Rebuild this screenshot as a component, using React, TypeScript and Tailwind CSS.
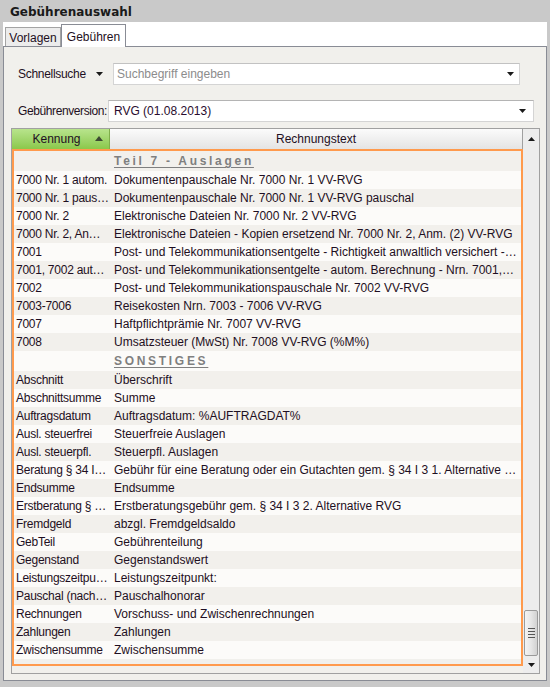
import React from "react";

type Row = { k?: string; t: string; section?: boolean };

const rows: Row[] = [
	{ t: "Teil 7 - Auslagen", section: true },
	{ k: "7000 Nr. 1 autom.", t: "Dokumentenpauschale Nr. 7000 Nr. 1 VV-RVG" },
	{ k: "7000 Nr. 1 pauschal", t: "Dokumentenpauschale Nr. 7000 Nr. 1 VV-RVG pauschal" },
	{ k: "7000 Nr. 2", t: "Elektronische Dateien Nr. 7000 Nr. 2 VV-RVG" },
	{ k: "7000 Nr. 2, Anm. (2)", t: "Elektronische Dateien - Kopien ersetzend Nr. 7000 Nr. 2, Anm. (2) VV-RVG" },
	{ k: "7001", t: "Post- und Telekommunikationsentgelte - Richtigkeit anwaltlich versichert - Nr. 7001 VV-RVG" },
	{ k: "7001, 7002 autom.", t: "Post- und Telekommunikationsentgelte - autom. Berechnung - Nrn. 7001, 7002 VV-RVG" },
	{ k: "7002", t: "Post- und Telekommunikationspauschale Nr. 7002 VV-RVG" },
	{ k: "7003-7006", t: "Reisekosten Nrn. 7003 - 7006 VV-RVG" },
	{ k: "7007", t: "Haftpflichtprämie Nr. 7007 VV-RVG" },
	{ k: "7008", t: "Umsatzsteuer (MwSt) Nr. 7008 VV-RVG (%M%)" },
	{ t: "SONSTIGES", section: true },
	{ k: "Abschnitt", t: "Überschrift" },
	{ k: "Abschnittsumme", t: "Summe" },
	{ k: "Auftragsdatum", t: "Auftragsdatum: %AUFTRAGDAT%" },
	{ k: "Ausl. steuerfrei", t: "Steuerfreie Auslagen" },
	{ k: "Ausl. steuerpfl.", t: "Steuerpfl. Auslagen" },
	{ k: "Beratung § 34 I 3 1.", t: "Gebühr für eine Beratung oder ein Gutachten gem. § 34 I 3 1. Alternative RVG" },
	{ k: "Endsumme", t: "Endsumme" },
	{ k: "Erstberatung § 34 I 3 2.", t: "Erstberatungsgebühr gem. § 34 I 3 2. Alternative RVG" },
	{ k: "Fremdgeld", t: "abzgl. Fremdgeldsaldo" },
	{ k: "GebTeil", t: "Gebührenteilung" },
	{ k: "Gegenstand", t: "Gegenstandswert" },
	{ k: "Leistungszeitpunkt", t: "Leistungszeitpunkt:" },
	{ k: "Pauschal (nachträglich)", t: "Pauschalhonorar" },
	{ k: "Rechnungen", t: "Vorschuss- und Zwischenrechnungen" },
	{ k: "Zahlungen", t: "Zahlungen" },
	{ k: "Zwischensumme", t: "Zwischensumme" },
];

function Caret() {
	return (
		<svg width="7" height="4" viewBox="0 0 7 4" className="shrink-0">
			<path d="M0 0h7L3.5 4z" fill="#1a1a1a" />
		</svg>
	);
}

export default function App() {
	return (
		<div
			className="w-[550px] h-[687px] bg-[#c9c9c9] flex flex-col px-[3px] pb-[6px] text-[12px] text-[#1e0f22]"
			style={{ fontFamily: '"Liberation Sans", Arial, sans-serif' }}
		>
			{/* title bar */}
			<div
				className="h-[22px] shrink-0 flex items-center pl-[7px] pt-[2px] font-bold text-[12px] text-[#1a1a1a]"
				style={{ fontFamily: '"DejaVu Sans", Verdana, sans-serif' }}
			>
				Gebührenauswahl
			</div>

			<div className="flex-1 bg-white flex flex-col min-h-0">
				{/* tabs */}
				<div className="h-[24px] shrink-0 flex items-end pl-[2px]">
					<div className="h-[20px] w-[56px] border border-b-0 border-[#a3a3a3] bg-[#ececec] flex items-center justify-center text-[12px] mb-[-1px]">
						Vorlagen
					</div>
					<div className="h-[23px] w-[65px] border border-b-0 border-[#898c95] bg-white flex items-start justify-center pt-[3px] text-[12px] relative z-10 mb-[-1px]">
						Gebühren
					</div>
				</div>

				{/* panel */}
				<div className="flex-1 min-h-0 border border-[#898c95] bg-[#f1f0ec] flex flex-col pl-[7px] pr-[6px] pt-[16px] pb-[6px]">
					<div className="h-[22px] flex items-center shrink-0">
						<span className="pl-[7px] w-[85px] tracking-[-0.3px]">Schnellsuche</span>
						<Caret />
						<div className="ml-[10px] w-[407px] h-[22px] bg-white border border-[#d4d4d4] border-t-[#c2c2c2] flex items-center pl-[3px] pr-[5px]">
							<span className="flex-1 text-[#8c8c8c]">Suchbegriff eingeben</span>
							<Caret />
						</div>
					</div>

					<div className="h-[22px] mt-[15px] flex items-center shrink-0">
						<span className="pl-[7px] w-[97px] tracking-[-0.4px] whitespace-nowrap">Gebührenversion:</span>
						<div className="w-[426px] h-[22px] bg-white border border-[#d4d4d4] border-t-[#b4b4b4] flex items-center pl-[5px] pr-[7px]">
							<span className="flex-1 text-[#2a0c2e]">RVG (01.08.2013)</span>
							<Caret />
						</div>
					</div>

					{/* grid */}
					<div className="mt-[6px] flex-1 min-h-0 border border-[#a0a0a0] flex">
						<div className="flex-1 flex flex-col min-w-0">
							<div className="h-[20px] shrink-0 flex">
								<div className="w-[98px] bg-gradient-to-b from-[#b8e48c] to-[#8bc84a] border-r border-[#7fae4a] flex items-center relative">
									<span className="flex-1 text-center pr-[8px]">Kennung</span>
									<svg width="8" height="5" viewBox="0 0 8 5" className="absolute right-[6px] top-[7px]">
										<path d="M0 5h8L4 0z" fill="#3d4a33" />
									</svg>
								</div>
								<div className="flex-1 bg-gradient-to-b from-[#fbfbfb] to-[#e4e4e4] border-r border-[#a0a0a0] flex items-center justify-center">
									Rechnungstext
								</div>
							</div>
							<div className="h-[517px] shrink-0 border-2 border-[#ff9a4d] flex flex-col">
								{rows.map((r, i) => (
									<div
										key={i}
										className={
											"flex shrink-0 items-center " +
											(r.section ? "h-[20px] " : "h-[18px] ") +
											(i % 2 === 0 ? "bg-[#f2f0ec]" : "bg-[#fcfbf9]")
										}
									>
										<div className="w-[96px] shrink-0 pl-[2px] pr-[1px] truncate tracking-[-0.25px]">{r.k}</div>
										{r.section ? (
											<div className="pl-[4px] font-bold underline underline-offset-[2px] tracking-[2.7px] text-[#7f7f7f]">
												{r.t}
											</div>
										) : (
											<div className="flex-1 pl-[4px] pr-[4px] truncate">{r.t}</div>
										)}
									</div>
								))}
							</div>
						</div>

						{/* scrollbar */}
						<div className="w-[16px] shrink-0 bg-[#ededed] flex flex-col items-center">
							<div className="h-[20px] flex items-center justify-center">
								<svg width="7" height="4" viewBox="0 0 7 4">
									<path d="M0 4h7L3.5 0z" fill="#1a1a1a" />
								</svg>
							</div>
							<div className="flex-1" />
							<div className="w-[14px] h-[46px] rounded-[2px] border border-[#9a9a9a] bg-gradient-to-r from-[#f4f4f4] via-[#e6e6e6] to-[#d2d2d2] flex flex-col items-center justify-center gap-[2px]">
								<div className="w-[7px] h-[1px] bg-[#555]" />
								<div className="w-[7px] h-[1px] bg-[#555]" />
								<div className="w-[7px] h-[1px] bg-[#555]" />
								<div className="w-[7px] h-[1px] bg-[#555]" />
							</div>
							<div className="h-[17px] flex items-center justify-center">
								<Caret />
							</div>
						</div>
					</div>
				</div>
			</div>
		</div>
	);
}
